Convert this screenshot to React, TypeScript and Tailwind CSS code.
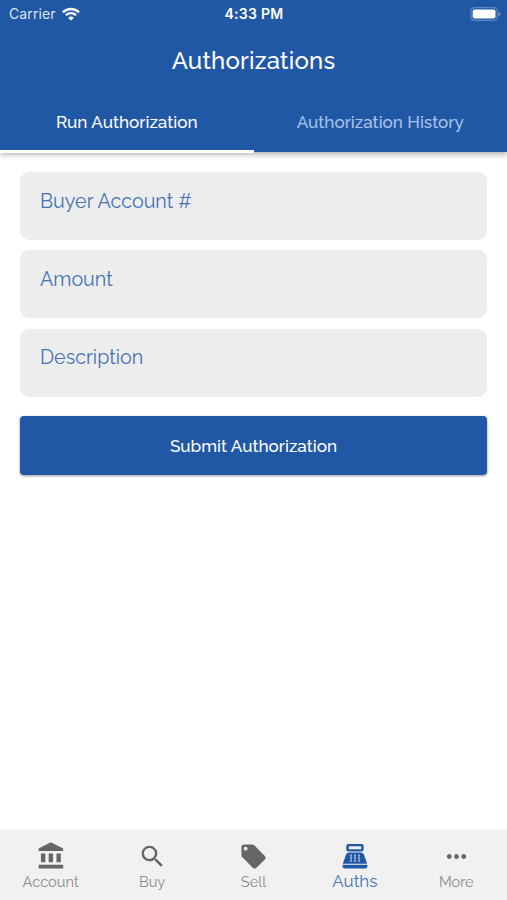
import React from "react";
import { clsx } from "clsx";
import { MdLocalOffer, MdMoreHoriz, MdSearch } from "react-icons/md";

function WifiIcon() {
  return (
    <svg width="18" height="14" viewBox="0 0 18 14" fill="none" stroke="white">
      <path d="M1 5.3a11.3 11.3 0 0 1 16 0" strokeWidth="2.5" />
      <path d="M3.9 8.2a7.2 7.2 0 0 1 10.2 0" strokeWidth="2.3" />
      <path d="M9 13.6 6.3 10.9a3.8 3.8 0 0 1 5.4 0Z" fill="white" stroke="none" />
    </svg>
  );
}

function BatteryIcon() {
  return (
    <svg width="31" height="14" viewBox="0 0 31 14" fill="none">
      <rect x="0.9" y="0.6" width="26.4" height="12.8" rx="3.8" stroke="#6088c3" strokeWidth="1.2" />
      <rect x="2.7" y="2.4" width="22.8" height="9.2" rx="2" fill="white" />
      <path d="M28.6 4.8c1.2.5 1.8 1.2 1.8 2.2s-.6 1.7-1.8 2.2Z" fill="#7fa0d0" />
    </svg>
  );
}

function BankIcon() {
  return (
    <svg width="31" height="30" viewBox="-0.8 0 24 24" preserveAspectRatio="none" fill="currentColor">
      <path d="M3.8 10v7h3.4v-7H3.8zm6 0v7h3.4v-7H9.8zM2 22h19v-3H2v3zm13.8-12v7h3.4v-7h-3.4zm-4.3-9L2 6v2h19V6l-9.5-5z" />
    </svg>
  );
}

function RegisterIcon() {
  return (
    <svg width="26" height="26" viewBox="0 0 26 26" fill="#2158a5">
      <path
        fillRule="evenodd"
        d="M6.6 1h12.8a2.3 2.3 0 0 1 2.3 2.3v2.9a2.3 2.3 0 0 1-2.3 2.3H6.6a2.3 2.3 0 0 1-2.3-2.3V3.3A2.3 2.3 0 0 1 6.6 1Zm.2 2.2v3.1h12.4V3.2Z"
      />
      <path d="M7 9.4h12a3 3 0 0 1 2.8 1.8L25.2 20.8H.8l3.4-9.6A3 3 0 0 1 7 9.4Z" />
      <path d="M.6 21.7h24.8v1.8a2 2 0 0 1-2 2H2.6a2 2 0 0 1-2-2Z" />
      <path
        d="M9 11.6v7.2M13 11.6v7.2M17 11.6v7.2"
        stroke="#b9cbe4"
        strokeWidth="1.5"
        strokeDasharray="2.1 .45"
      />
    </svg>
  );
}

const fields = ["Buyer Account #", "Amount", "Description"];

const navItems = [
  { label: "Account", icon: <BankIcon /> },
  { label: "Buy", icon: <MdSearch size={29} /> },
  { label: "Sell", icon: <MdLocalOffer size={29} /> },
  { label: "Auths", icon: <RegisterIcon />, active: true },
  { label: "More", icon: <MdMoreHoriz size={29} /> },
];

export default function App() {
  return (
    <div className="flex h-[900px] w-[507px] flex-col bg-white font-['Raleway','Lato',sans-serif]">
      <header className="h-[152px] shrink-0 bg-[#2158a5] text-white shadow-[0_2px_6px_rgba(0,0,0,0.35)]">
        {/* Status bar */}
        <div className="grid h-[27px] grid-cols-3 items-center pr-[6px] pl-[9px] font-['Inter',sans-serif] text-[14px]">
          <div className="flex items-center gap-[6px]">
            <span className="tracking-[0.1px] text-[#dce6f4]">Carrier</span>
            <WifiIcon />
          </div>
          <span className="-ml-[2px] text-center text-[14px] font-semibold tracking-[0.3px]">4:33 PM</span>
          <div className="flex justify-end">
            <BatteryIcon />
          </div>
        </div>

        <h1 className="flex h-[67px] items-center justify-center pt-[1px] text-[24px] font-medium tracking-[0.2px]">
          Authorizations
        </h1>

        {/* Tabs */}
        <div className="grid h-[59px] grid-cols-2 text-[17.1px] font-medium">
          <button className="flex items-center justify-center border-b-[3px] border-white pt-[1px]">
            Run Authorization
          </button>
          <button className="flex items-center justify-center pb-[2px] text-[#a9c3e9]">
            Authorization History
          </button>
        </div>
      </header>

      <main className="flex grow flex-col px-5 pt-5">
        <div className="flex flex-col gap-[10.3px]">
          {fields.map((label) => (
            <label
              key={label}
              className="h-[68px] rounded-[9px] bg-[#ededed] px-5 pt-[14.8px] text-[19.7px] leading-[28px] text-[#4472b5]"
            >
              {label}
            </label>
          ))}
        </div>
        <button className="mt-[19.4px] h-[59px] rounded-[4px] bg-[#2158a5] pt-[2px] text-[17.1px] font-medium text-white shadow-[0_1px_3px_rgba(0,0,0,0.4)]">
          Submit Authorization
        </button>
      </main>

      <nav className="grid h-[70px] shrink-0 grid-cols-5 bg-[#f1f1f1] shadow-[0_-1px_2px_rgba(0,0,0,0.03)]">
        {navItems.map((item) => (
          <div
            key={item.label}
            className={clsx(
              "flex flex-col items-center pt-[11px]",
              item.active ? "text-[#4472b5]" : "text-[#666666]"
            )}
          >
            <div className="flex h-[30px] items-center">{item.icon}</div>
            <span
              className={clsx(
                item.active
                  ? "text-[17px] leading-[20px]"
                  : "text-[14.6px] leading-[22px] text-[#8c8c8c]"
              )}
            >
              {item.label}
            </span>
          </div>
        ))}
      </nav>
    </div>
  );
}
